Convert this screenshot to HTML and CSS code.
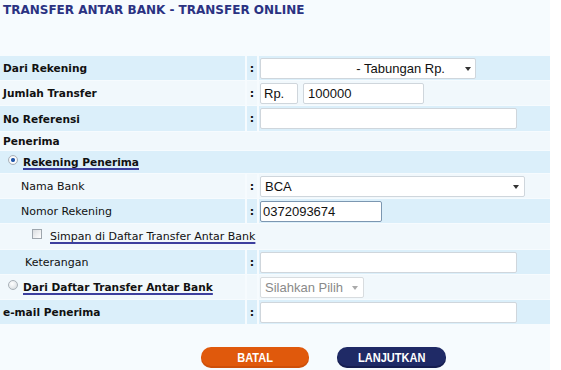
FILE: index.html
```html
<!DOCTYPE html>
<html lang="id">
<head>
<meta charset="utf-8">
<title>Transfer Antar Bank</title>
<link rel="stylesheet" href="styles.css">
</head>
<body>
<div class="page">
  <h1 class="title">TRANSFER ANTAR BANK - TRANSFER ONLINE</h1>
  <div class="form">
    <div class="row blue">
      <div class="cell lbl bold">Dari Rekening</div>
      <div class="cell colon">:</div>
      <div class="cell val">
        <div class="select sel-dari"><span class="sel-text">- Tabungan Rp.</span><span class="arrow"></span></div>
      </div>
    </div>
    <div class="row light">
      <div class="cell lbl bold">Jumlah Transfer</div>
      <div class="cell colon">:</div>
      <div class="cell val">
        <div class="input in-rp">Rp.</div>
        <div class="input in-amount">100000</div>
      </div>
    </div>
    <div class="row blue tall">
      <div class="cell lbl bold">No Referensi</div>
      <div class="cell colon">:</div>
      <div class="cell val"><div class="input in-wide"></div></div>
    </div>
    <div class="row light span short">
      <div class="cell lbl bold">Penerima</div>
    </div>
    <div class="row blue span mid">
      <div class="cell lbl bold radio-lbl"><span class="radio checked"></span><span class="link">Rekening Penerima</span></div>
    </div>
    <div class="row light">
      <div class="cell lbl indent">Nama Bank</div>
      <div class="cell colon">:</div>
      <div class="cell val">
        <div class="select sel-bank"><span class="sel-text">BCA</span><span class="arrow"></span></div>
      </div>
    </div>
    <div class="row blue">
      <div class="cell lbl indent">Nomor Rekening</div>
      <div class="cell colon">:</div>
      <div class="cell val"><div class="input in-norek focus">0372093674</div></div>
    </div>
    <div class="row light span tall">
      <div class="cell lbl check-lbl"><span class="checkbox"></span><span class="link">Simpan di Daftar Transfer Antar Bank</span></div>
    </div>
    <div class="row blue">
      <div class="cell lbl indent2">Keterangan</div>
      <div class="cell colon">:</div>
      <div class="cell val"><div class="input in-wide"></div></div>
    </div>
    <div class="row light">
      <div class="cell lbl bold radio-lbl"><span class="radio"></span><span class="link">Dari Daftar Transfer Antar Bank</span></div>
      <div class="cell colon"></div>
      <div class="cell val">
        <div class="select sel-pilih disabled"><span class="sel-text">Silahkan Pilih</span><span class="arrow"></span></div>
      </div>
    </div>
    <div class="row blue">
      <div class="cell lbl bold">e-mail Penerima</div>
      <div class="cell colon">:</div>
      <div class="cell val"><div class="input in-wide"></div></div>
    </div>
  </div>
  <div class="buttons">
    <div class="btn btn-cancel"><span class="btn-text">BATAL</span></div>
    <div class="btn btn-next"><span class="btn-text">LANJUTKAN</span></div>
  </div>
</div>
</body>
</html>
```
FILE: styles.css
```css
html, body {
  margin: 0;
  padding: 0;
  background: #ffffff;
}
.page {
  width: 550px;
  height: 370px;
  background: #f6fbfe;
  font-family: "DejaVu Sans", Verdana, sans-serif;
  color: #111;
  overflow: hidden;
}
.title {
  margin: 0;
  padding: 3px 0 0 3px;
  height: 56px;
  box-sizing: border-box;
  font-size: 12px;
  line-height: 14px;
  font-weight: bold;
  color: #2a3282;
}
.form {
  display: flex;
  flex-direction: column;
  gap: 1px;
}
.row {
  display: grid;
  grid-template-columns: 245px 10px 1fr;
  column-gap: 2px;
  height: 24px;
}
.row.tall { height: 25px; }
.row.short { height: 18px; }
.row.mid { height: 22px; }
.row.span { grid-template-columns: 1fr; }
.row.blue .cell { background: #dbeffa; }
.row.light .cell { background: #f1f8fc; }
.cell {
  display: flex;
  align-items: center;
  min-width: 0;
}
.lbl {
  padding-left: 3px;
  font-size: 11px;
  white-space: nowrap;
}
.lbl.bold {
  font-weight: bold;
  font-size: 10.6px;
}
.lbl.indent { padding-left: 21px; }
.lbl.indent2 { padding-left: 25px; }
.colon {
  justify-content: center;
  font-weight: bold;
  font-size: 11px;
}
.val {
  padding-left: 1px;
  gap: 5px;
}
.link {
  text-decoration: underline;
  text-decoration-color: #3c3f9e;
  text-decoration-thickness: 2px;
  text-underline-offset: 2px;
}
.radio-lbl { padding-left: 8px; }
.radio {
  width: 10px;
  height: 10px;
  border-radius: 50%;
  box-sizing: border-box;
  border: 1px solid #a9b1b8;
  background: radial-gradient(circle at 40% 35%, #ffffff 0%, #e4e7ea 60%, #c9ced3 100%);
  margin-right: 5px;
  margin-top: -4px;
  flex: none;
}
.radio.checked {
  background: radial-gradient(circle, #1d4f9c 0, #2f63b3 1.8px, #ffffff 2.4px, #dfe3e7 100%);
}
.check-lbl { padding-left: 32px; }
.checkbox {
  width: 10px;
  height: 10px;
  box-sizing: border-box;
  border: 1px solid #9ea6ad;
  background: linear-gradient(135deg, #dadde0, #ffffff);
  margin-right: 8px;
  margin-top: -5px;
  flex: none;
}
.input, .select {
  box-sizing: border-box;
  height: 21px;
  background: #ffffff;
  border: 1px solid #cfd6dc;
  border-radius: 2px;
  font-family: "Liberation Sans", Arial, sans-serif;
  font-size: 13px;
  color: #111;
  display: flex;
  align-items: center;
  padding-left: 4px;
  white-space: nowrap;
}
.in-rp { width: 38px; padding-left: 3px; }
.in-amount { width: 121px; padding-left: 4px; }
.in-wide { width: 257px; height: 21px; }
.in-norek { width: 122px; padding-left: 2px; }
.input.focus { border-color: #7c97b1; }
.select {
  position: relative;
  padding-right: 14px;
}
.sel-dari { width: 216px; justify-content: flex-end; padding-right: 30px; }
.sel-bank { width: 265px; }
.sel-pilih { width: 104px; }
.select.disabled { color: #8a8a8a; border-color: #d8dcdf; }
.arrow {
  position: absolute;
  right: 5px;
  top: 8px;
  width: 0;
  height: 0;
  border-left: 3px solid transparent;
  border-right: 3px solid transparent;
  border-top: 4px solid #333;
}
.sel-dari .arrow { right: 4px; }
.select.disabled .arrow { border-top-color: #aaa; }
.buttons {
  display: flex;
  gap: 28px;
  padding-left: 201px;
  margin-top: 23px;
}
.btn {
  height: 21px;
  width: 108px;
  border-radius: 10px;
  display: flex;
  align-items: center;
  justify-content: center;
  font-family: "Liberation Sans", Arial, sans-serif;
  font-weight: bold;
  font-size: 13px;
  color: #ffffff;
}
.btn-text {
  display: inline-block;
  transform: scaleX(0.85);
}
.btn-cancel {
  background: #e0590c;
  box-shadow: inset 0 -2px 0 rgba(150, 50, 0, 0.25);
}
.btn-next {
  width: 109px;
  background: #1f2a66;
  box-shadow: inset 0 -2px 0 rgba(0, 0, 30, 0.3);
}
```
